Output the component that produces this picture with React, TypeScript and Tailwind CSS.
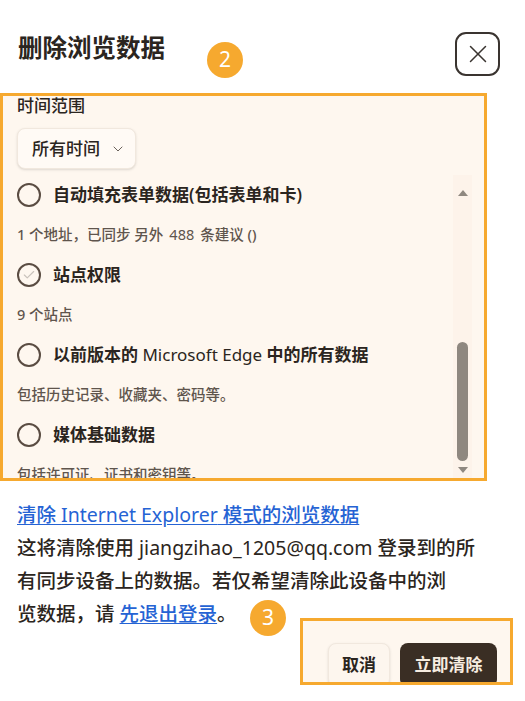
import { Check, ChevronDown, X } from 'lucide-react';

const items = [
  {
    label: '自动填充表单数据(包括表单和卡)',
    note: <>1 个地址，已同步 另外<span className="mx-1.5 font-normal">488</span>条建议 ()</>,
    checked: false,
  },
  { label: '站点权限', note: '9 个站点', checked: true },
  {
    label: <>以前版本的 <span className="font-normal">Microsoft Edge</span> 中的所有数据</>,
    note: '包括历史记录、收藏夹、密码等。',
    checked: false,
  },
  { label: '媒体基础数据', note: '包括许可证、证书和密钥等。', checked: false },
];

function StepBadge({ n, className }: { n: number; className: string }) {
  return (
    <div
      className={`absolute flex h-9 w-9 items-center justify-center rounded-full bg-[#f6a92f] text-[21px] text-white ${className}`}
    >
      {n}
    </div>
  );
}

function Radio({ checked }: { checked: boolean }) {
  return (
    <span className="flex h-6 w-6 shrink-0 items-center justify-center rounded-full border-2 border-[#5a4c42]">
      {checked && <Check className="h-3.5 w-3.5 text-[#c9c2bb]" strokeWidth={2} />}
    </span>
  );
}

export default function App() {
  return (
    <div
      className="relative h-[701px] w-[525px] overflow-hidden bg-white text-[#2b2520]"
      style={{ fontFamily: '"Noto Sans", "Noto Sans CJK SC", sans-serif' }}
    >
      {/* Header */}
      <div className="flex items-start justify-between pl-[18px] pr-[25px] pt-8">
        <h1 className="text-[24.5px] font-bold leading-[32px]">删除浏览数据</h1>
        <button className="flex h-[44px] w-[45px] items-center justify-center rounded-[11px] border-2 border-[#3a3430]">
          <X className="h-[30px] w-[30px] text-[#3a3430]" strokeWidth={1.2} />
        </button>
      </div>
      <StepBadge n={2} className="left-[207px] top-[42px]" />

      {/* Time range + data types */}
      <div className="mt-[17px] h-[388px] w-[487px] border-[3px] border-[#f6a92f] bg-[#fef7ef]">
        <div className="pl-[14px] text-[17px] font-medium leading-[20px]">时间范围</div>
        <button className="ml-[14px] mt-3 flex h-[41px] w-[119px] items-center gap-2.5 rounded-lg border border-[#f1e8de] bg-[#fffaf5] pl-[14px] text-[17px] font-medium shadow-sm">
          所有时间
          <ChevronDown className="h-4 w-4 text-[#6b625b]" strokeWidth={1.5} />
        </button>

        <div className="mt-1.5 flex h-[303px] overflow-hidden">
          <div className="flex-1 pl-[14px]">
            {items.map((item, i) => (
              <div key={i}>
                <div className="flex h-10 items-center gap-3 text-[17px] font-semibold">
                  <Radio checked={item.checked} />
                  <span>{item.label}</span>
                </div>
                <div className="flex h-10 items-center text-[14.5px] font-medium text-[#5f554d]">{item.note}</div>
              </div>
            ))}
          </div>

          {/* Scrollbar */}
          <div className="mr-3 flex w-[19px] flex-col items-center bg-[#fdf3ea] pt-[15px]">
            <div className="h-0 w-0 border-x-[5px] border-b-[6px] border-x-transparent border-b-[#8f8880]" />
            <div className="mt-[146px] h-[119px] w-[11px] rounded-full bg-[#8f8880]" />
            <div className="mt-[6px] h-0 w-0 border-x-[5px] border-t-[6px] border-x-transparent border-t-[#8f8880]" />
          </div>
        </div>
      </div>

      {/* Sync notice */}
      <div className="mt-[17px] pl-[17px] text-[19.5px] font-medium leading-[33px]">
        <a className="text-[#2563d4] underline underline-offset-2">
          清除 <span className="font-normal">Internet Explorer</span> 模式的浏览数据
        </a>
        <br />
        这将清除使用 <span className="font-normal">jiangzihao_1205@qq.com</span> 登录到的所
        <br />
        有同步设备上的数据。若仅希望清除此设备中的浏
        <br />
        览数据，请 <a className="text-[#2563d4] underline underline-offset-2">先退出登录</a>。
      </div>
      <StepBadge n={3} className="left-[250px] top-[600px]" />

      {/* Actions */}
      <div className="ml-[300px] mt-[-12px] flex h-[67px] w-[213px] items-start justify-end gap-2.5 overflow-hidden border-[3px] border-[#f6a92f] bg-[#fef7ef] pr-[13px] pt-[22px]">
        <button className="h-11 w-[62px] shrink-0 rounded-lg border border-[#f1e8de] bg-[#fdf6ee] text-[17px] font-bold shadow-sm">
          取消
        </button>
        <button className="h-11 w-[97px] shrink-0 rounded-lg bg-[#3a2e24] text-[17px] font-bold text-[#f6ece0]">
          立即清除
        </button>
      </div>
    </div>
  );
}
